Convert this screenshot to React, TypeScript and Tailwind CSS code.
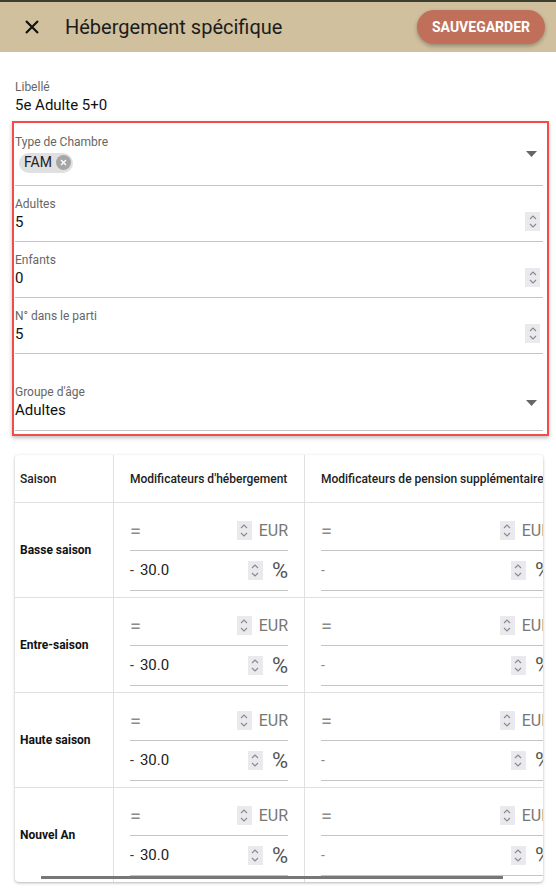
import { ReactNode } from "react";

const seasons = ["Basse saison", "Entre-saison", "Haute saison", "Nouvel An"];

function Spinner() {
  return (
    <div className="w-[15px] h-[19px] bg-[#e9e9ee] flex flex-col items-center justify-center gap-[3px]">
      <svg width="8" height="5" viewBox="0 0 8 5">
        <path d="M1 4 L4 1 L7 4" fill="none" stroke="#8a8a8a" strokeWidth="1.1" />
      </svg>
      <svg width="8" height="5" viewBox="0 0 8 5">
        <path d="M1 1 L4 4 L7 1" fill="none" stroke="#8a8a8a" strokeWidth="1.1" />
      </svg>
    </div>
  );
}

function Caret() {
  return (
    <svg width="11" height="6" viewBox="0 0 11 6" className="shrink-0">
      <path d="M0 0 L11 0 L5.5 6 Z" fill="#666" />
    </svg>
  );
}

function NumberField({ label, value }: { label: string; value: string }) {
  return (
    <div className="pt-[10px] pb-[9px] border-b border-[#c4c4c4] flex items-end">
      <div className="flex-1">
        <div className="text-xs leading-4 text-[#666]">{label}</div>
        <div className="text-[15px] leading-5 text-[#111]">{value}</div>
      </div>
      <div className="mr-[3px] mb-[1px]">
        <Spinner />
      </div>
    </div>
  );
}

function ModInput({
  children,
  unit,
  euro,
  width,
}: {
  children: ReactNode;
  unit: string;
  euro: boolean;
  width: string;
}) {
  return (
    <div className={`${width} h-[40px] border-b border-[#c4c4c4] flex items-center`}>
      <div className="flex-1 flex items-center">{children}</div>
      <Spinner />
      {euro ? (
        <span className="ml-[7px] text-[16px] text-[#777]">{unit}</span>
      ) : (
        <span className="ml-[9px] text-[22px] leading-none text-[#555]">{unit}</span>
      )}
    </div>
  );
}

function ModCell({ filled, width, border }: { filled: boolean; width: string; border: boolean }) {
  return (
    <div className={`px-4 pt-[8px] pb-[6px] ${border ? "border-r border-[#e0e0e0]" : ""}`}>
      <ModInput unit="EUR" euro width={width}>
        <span className="text-[20px] leading-none text-[#8a8a8a]">=</span>
      </ModInput>
      <ModInput unit="%" euro={false} width={width}>
        {filled ? (
          <>
            <span className="text-[14px] text-[#333]">-</span>
            <span className="ml-[6px] text-[15px] text-[#222]">30.0</span>
          </>
        ) : (
          <span className="text-[14px] text-[#888]">-</span>
        )}
      </ModInput>
    </div>
  );
}

export default function App() {
  return (
    <div
      className="w-[556px] min-h-screen bg-white"
      style={{ fontFamily: "Roboto, 'Liberation Sans', sans-serif" }}
    >
      <div className="border-t-2 border-[#3b3f30] bg-[#d0c09e] h-[52px] flex items-center pl-[24px] pr-[11px]">
        <svg width="16" height="16" viewBox="0 0 16 16">
          <path d="M2 2 L14 14 M14 2 L2 14" stroke="#111" strokeWidth="2.2" />
        </svg>
        <div className="ml-[25px] text-[20px] text-[#1c1c1c] flex-1">Hébergement spécifique</div>
        <button className="h-[34px] px-[15px] rounded-full bg-[#c0705a] text-white text-[14px] font-bold shadow-[0_2px_4px_rgba(0,0,0,0.3)]">
          SAUVEGARDER
        </button>
      </div>

      <div className="px-[15px] pt-[27px]">
        <div className="text-xs leading-4 text-[#666]">Libellé</div>
        <div className="text-[15px] leading-5 text-[#111]">5e Adulte 5+0</div>
      </div>

      <div className="ml-[12px] mr-[7px] mt-[6px] border-2 border-[#f44a4a] shadow-[0_2px_4px_rgba(0,0,0,0.25)] pl-[1px] pr-[4px] pb-[3px]">
        <div className="pt-[11px] pb-[11px] border-b border-[#c4c4c4] flex items-start">
          <div className="flex-1">
            <div className="text-xs leading-4 text-[#666]">Type de Chambre</div>
            <div className="mt-[2px] inline-flex items-center h-[20px] rounded-full bg-[#e0e0e0] pl-[5px] pr-[2px] ml-[4px]">
              <span className="text-[14px] text-[#222]">FAM</span>
              <span className="ml-[4px] w-[15px] h-[15px] rounded-full bg-[#a5a5a5] flex items-center justify-center">
                <svg width="7" height="7" viewBox="0 0 7 7">
                  <path d="M1 1 L6 6 M6 1 L1 6" stroke="#fff" strokeWidth="1.3" />
                </svg>
              </span>
            </div>
          </div>
          <div className="mt-[17px] mr-[6px]">
            <Caret />
          </div>
        </div>
        <NumberField label="Adultes" value="5" />
        <NumberField label="Enfants" value="0" />
        <NumberField label="N° dans le parti" value="5" />
        <div className="pt-[30px] pb-[10px] border-b border-[#c4c4c4] flex items-end">
          <div className="flex-1">
            <div className="text-xs leading-4 text-[#666]">Groupe d'âge</div>
            <div className="text-[15px] leading-5 text-[#111]">Adultes</div>
          </div>
          <div className="mb-[14px] mr-[6px]">
            <Caret />
          </div>
        </div>
      </div>

      <div className="relative ml-[15px] mr-[13px] mt-[19px] overflow-hidden rounded-[4px] shadow-[0_1px_3px_rgba(0,0,0,0.3)]">
        <div className="w-[560px]">
          <div className="flex h-[48px] border-b border-[#e0e0e0] text-xs font-medium text-[#222]">
            <div className="w-[99px] pl-[5px] flex items-center border-r border-[#e0e0e0]">Saison</div>
            <div className="w-[191px] px-4 flex items-center border-r border-[#e0e0e0]">
              Modificateurs d'hébergement
            </div>
            <div className="flex-1 px-4 flex items-center whitespace-nowrap">
              Modificateurs de pension supplémentaire
            </div>
          </div>
          {seasons.map((s, i) => (
            <div
              key={s}
              className={`flex ${i < seasons.length - 1 ? "border-b border-[#e0e0e0]" : ""}`}
            >
              <div className="w-[99px] pl-[5px] flex items-center border-r border-[#e0e0e0] text-xs font-bold text-[#111]">
                {s}
              </div>
              <div className="w-[191px]">
                <ModCell filled width="w-[158px]" border />
              </div>
              <div className="flex-1">
                <ModCell filled={false} width="w-[230px]" border={false} />
              </div>
            </div>
          ))}
        </div>
        <div className="absolute left-[26px] bottom-[3px] w-[462px] h-[3px] bg-[#777]" />
      </div>
    </div>
  );
}
